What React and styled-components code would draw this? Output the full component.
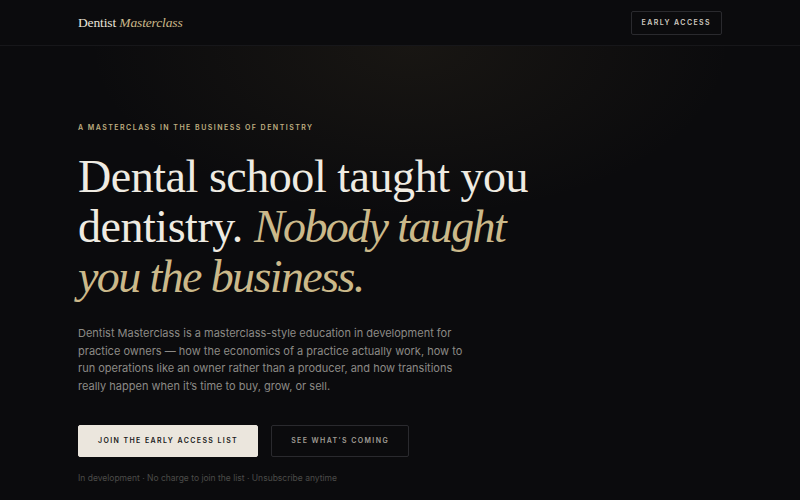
import React from 'react';
import styled, { createGlobalStyle } from 'styled-components';

const GlobalStyle = createGlobalStyle`
  html, body {
    margin: 0;
    padding: 0;
    background: #0b0b0d;
  }
  * { box-sizing: border-box; }
`;

const serif = `"Liberation Serif", "DejaVu Serif", serif`;
const sans = `"Inter", "Liberation Sans", sans-serif`;

const App = () => {
  return (
    <>
      <GlobalStyle />
      <Page>
        <Nav>
          <Logo>
            Dentist <em>Masterclass</em>
          </Logo>
          <NavButton>Early Access</NavButton>
        </Nav>

        <Hero>
          <Eyebrow>A masterclass in the business of dentistry</Eyebrow>
          <Headline>
            Dental school taught you
            <br />
            dentistry. <Accent>Nobody taught</Accent>
            <br />
            <Accent>you the business.</Accent>
          </Headline>
          <Lead>
            Dentist Masterclass is a masterclass-style education in development for
            <br />
            practice owners — how the economics of a practice actually work, how to
            <br />
            run operations like an owner rather than a producer, and how transitions
            <br />
            really happen when it’s time to buy, grow, or sell.
          </Lead>
          <Actions>
            <CtaButton primary>Join the early access list</CtaButton>
            <CtaButton>See what’s coming</CtaButton>
          </Actions>
          <Note>In development · No charge to join the list · Unsubscribe anytime</Note>
        </Hero>
      </Page>
    </>
  );
};

const Page = styled.div`
  width: 800px;
  height: 500px;
  overflow: hidden;
  background: #0b0b0d;
`;

const Nav = styled.header`
  display: flex;
  justify-content: space-between;
  align-items: center;
  height: 46px;
  padding: 0 78px;
  border-bottom: 1px solid #17171a;
  background: #0b0b0d;
`;

const Logo = styled.div`
  font-family: ${serif};
  font-size: 13.5px;
  color: #e8e4da;
  padding-top: 1px;
  letter-spacing: -0.01em;

  em {
    color: #cbb98a;
    font-style: italic;
  }
`;

const NavButton = styled.button`
  height: 24px;
  padding: 0 10px;
  background: transparent;
  border: 1px solid #2a2a2e;
  border-radius: 2px;
  color: #cfcac0;
  font-family: ${sans};
  font-size: 7px;
  font-weight: 600;
  letter-spacing: 0.2em;
  text-transform: uppercase;
  cursor: pointer;
`;

const Hero = styled.section`
  height: 454px;
  padding: 77px 78px 0;
  background:
    radial-gradient(ellipse 320px 170px at 410px 0px, rgba(120, 100, 60, 0.12), transparent 100%),
    #0b0b0d;
`;

const Eyebrow = styled.div`
  font-family: ${sans};
  font-size: 7px;
  font-weight: 600;
  letter-spacing: 0.21em;
  text-transform: uppercase;
  color: #bfae80;
  line-height: 10px;
`;

const Headline = styled.h1`
  margin: 19px 0 0;
  font-family: ${serif};
  font-weight: 400;
  font-size: 46px;
  line-height: 50px;
  letter-spacing: -0.01em;
  color: #efebe2;
`;

const Accent = styled.em`
  font-style: italic;
  color: #cbb98a;
  letter-spacing: -0.035em;
`;

const Lead = styled.p`
  margin: 23px 0 0;
  width: 420px;
  font-family: ${sans};
  font-size: 11px;
  line-height: 17.7px;
  color: #8c8a86;
  white-space: nowrap;
`;

const Actions = styled.div`
  display: flex;
  gap: 13px;
  margin-top: 29px;
`;

const CtaButton = styled.button`
  height: 32px;
  padding: 0 19px;
  border-radius: 2px;
  border: 1px solid ${(p) => (p.primary ? '#ebe6dd' : '#2a2a2e')};
  background: ${(p) => (p.primary ? '#ebe6dd' : 'transparent')};
  color: ${(p) => (p.primary ? '#1a1a1a' : '#a09c94')};
  font-family: ${sans};
  font-size: 7px;
  font-weight: 600;
  letter-spacing: 0.2em;
  text-transform: uppercase;
  cursor: pointer;
`;

const Note = styled.div`
  margin-top: 16px;
  font-family: ${sans};
  font-size: 8.5px;
  color: #4c4b49;
`;

export default App;
